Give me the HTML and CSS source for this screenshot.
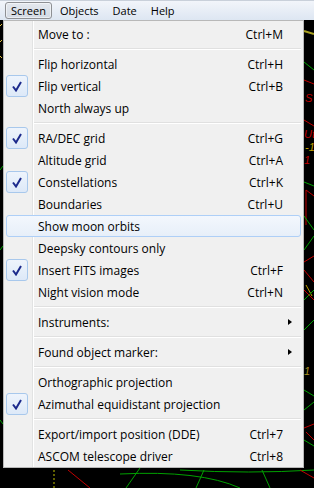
FILE: index.html
```html
<!DOCTYPE html>
<html lang="en">
<head>
<meta charset="UTF-8">
<meta name="viewport" content="width=device-width, initial-scale=1.0">
<title>Screen menu</title>
<link rel="stylesheet" href="styles.css">
</head>
<body>
  <div id="screen">
    <svg class="sky" width="314" height="488" viewBox="0 0 314 488">
      <!-- left strip -->
      <path d="M0 26 L2 24 M0 42 L2 40 M0 56 L2 58" stroke="#e0c040" fill="none" />
      <line x1="0" y1="170" x2="3" y2="166" stroke="#00a000" />
      <line x1="0" y1="250" x2="3" y2="246" stroke="#00a000" />
      <line x1="0" y1="420" x2="3" y2="424" stroke="#00a000" />
      <!-- right strip -->
      <path d="M304 31 L314 34" stroke="#a8a020" stroke-width="2" fill="none" />
      <path d="M304 62 L314 70" stroke="#00a000" fill="none" />
      <path d="M304 80 L314 84" stroke="#c00000" fill="none" />
      <text x="305" y="102" fill="#c00000" class="sky-label">S</text>
      <path d="M304 120 L314 126" stroke="#c00000" fill="none" />
      <text x="304" y="138" fill="#c00000" class="sky-label">Ut</text>
      <text x="305" y="151" fill="#c0a000" class="sky-label">-1</text>
      <text x="304" y="164" fill="#c00000" class="sky-label">1</text>
      <path d="M304 182 L314 186" stroke="#00a000" fill="none" />
      <path d="M306 190 L306 225 M306 190 L314 196" stroke="#c00000" fill="none" />
      <path d="M304 216 L314 230 M304 250 L314 236" stroke="#00a000" fill="none" />
      <path d="M304 262 L314 256 M304 270 L314 282 M304 290 L314 300" stroke="#c00000" fill="none" />
      <path d="M306 285 L312 296" stroke="#c0a000" fill="none" />
      <path d="M304 300 L314 290 M304 330 L314 320" stroke="#00a000" fill="none" />
      <text x="304" y="375" fill="#a89020" class="sky-label">1</text>
      <path d="M304 390 L314 396 M304 410 L314 402 M304 440 L314 446" stroke="#00a000" fill="none" />
      <path d="M304 428 L314 424 M306 432 L314 440" stroke="#c00000" fill="none" />
      <!-- bottom strip -->
      <path d="M54 470 L54 488" stroke="#c0c000" stroke-dasharray="2 2" />
      <path d="M68 470 L90 488" stroke="#c00000" fill="none" />
      <path d="M120 474 Q200 470 240 488" stroke="#00a000" fill="none" />
      <path d="M126 488 L140 468" stroke="#00a000" fill="none" />
      <path d="M180 470 Q250 474 314 470" stroke="#00a000" fill="none" />
      <path d="M196 488 L204 470" stroke="#00a000" fill="none" />
      <path d="M262 470 L270 488" stroke="#00a000" fill="none" />
      <path d="M300 470 L314 478" stroke="#c00000" fill="none" />
    </svg>

    <div class="menubar">
      <span class="top-item active">Screen</span>
      <span class="top-item">Objects</span>
      <span class="top-item">Date</span>
      <span class="top-item">Help</span>
    </div>

    <div class="dropdown">
      <div class="item"><span class="check"></span><span class="label">Move to :</span><span class="key">Ctrl+M</span></div>
      <div class="sep"></div>
      <div class="item"><span class="check"></span><span class="label">Flip horizontal</span><span class="key">Ctrl+H</span></div>
      <div class="item"><span class="check on"><svg width="10" height="11" viewBox="0 0 10 11"><path d="M1 5.5 L4 9.5 L9 1" /></svg></span><span class="label">Flip vertical</span><span class="key">Ctrl+B</span></div>
      <div class="item"><span class="check"></span><span class="label">North always up</span></div>
      <div class="sep"></div>
      <div class="item"><span class="check on"><svg width="10" height="11" viewBox="0 0 10 11"><path d="M1 5.5 L4 9.5 L9 1" /></svg></span><span class="label">RA/DEC grid</span><span class="key">Ctrl+G</span></div>
      <div class="item"><span class="check"></span><span class="label">Altitude grid</span><span class="key">Ctrl+A</span></div>
      <div class="item"><span class="check on"><svg width="10" height="11" viewBox="0 0 10 11"><path d="M1 5.5 L4 9.5 L9 1" /></svg></span><span class="label">Constellations</span><span class="key">Ctrl+K</span></div>
      <div class="item"><span class="check"></span><span class="label">Boundaries</span><span class="key">Ctrl+U</span></div>
      <div class="item hover"><span class="check"></span><span class="label">Show moon orbits</span></div>
      <div class="item"><span class="check"></span><span class="label">Deepsky contours only</span></div>
      <div class="item"><span class="check on"><svg width="10" height="11" viewBox="0 0 10 11"><path d="M1 5.5 L4 9.5 L9 1" /></svg></span><span class="label">Insert FITS images</span><span class="key">Ctrl+F</span></div>
      <div class="item"><span class="check"></span><span class="label">Night vision mode</span><span class="key">Ctrl+N</span></div>
      <div class="sep"></div>
      <div class="item"><span class="check"></span><span class="label">Instruments:</span><span class="arrow"></span></div>
      <div class="sep"></div>
      <div class="item"><span class="check"></span><span class="label">Found object marker:</span><span class="arrow"></span></div>
      <div class="sep"></div>
      <div class="item"><span class="check"></span><span class="label">Orthographic projection</span></div>
      <div class="item"><span class="check on"><svg width="10" height="11" viewBox="0 0 10 11"><path d="M1 5.5 L4 9.5 L9 1" /></svg></span><span class="label">Azimuthal equidistant projection</span></div>
      <div class="sep"></div>
      <div class="item"><span class="check"></span><span class="label">Export/import position (DDE)</span><span class="key">Ctrl+7</span></div>
      <div class="item"><span class="check"></span><span class="label">ASCOM telescope driver</span><span class="key">Ctrl+8</span></div>
    </div>
  </div>
</body>
</html>
```

FILE: styles.css
```css
body {
  margin: 0;
  padding: 0;
  background-color: #000;
  font-family: "Open Sans", "Noto Sans", sans-serif;
  font-size: 12px;
  color: #000;
}
#screen {
  position: relative;
  width: 314px;
  height: 488px;
  overflow: hidden;
  background-color: #000;
}
.sky {
  position: absolute;
  left: 0;
  top: 0;
}
.sky-label {
  font-family: "Liberation Sans", sans-serif;
  font-size: 11px;
  font-style: italic;
}
.menubar {
  position: relative;
  height: 20px;
  box-sizing: border-box;
  border-top: 1px solid #c9d0da;
  background: linear-gradient(#f2f5fa, #dde6f2);
  display: flex;
  align-items: center;
  padding-left: 5px;
  font-size: 11px;
}
.top-item {
  height: 17px;
  box-sizing: border-box;
  padding: 0 5px;
  line-height: 15px;
  border: 1px solid transparent;
  margin-right: 2px;
}
.top-item.active {
  border-color: #8e9094;
  border-radius: 3px;
  background: linear-gradient(#e4e8ee, #d3dae4);
  box-shadow: inset 0 0 0 1px rgba(255, 255, 255, 0.5);
}
.dropdown {
  position: absolute;
  left: 3px;
  top: 20px;
  width: 301px;
  box-sizing: border-box;
  border: 1px solid #b8b8b8;
  padding: 2px 2px 0 2px;
  background-color: #f0f0f0;
  background-image: linear-gradient(to right, transparent 28px, #e2e3e3 28px, #e2e3e3 29px, #fff 29px, #fff 30px, transparent 30px);
}
.item {
  height: 22px;
  display: flex;
  align-items: center;
  box-sizing: border-box;
  border: 1px solid transparent;
  border-radius: 3px;
}
.item.hover {
  border-color: #aecff7;
  background: linear-gradient(#f3f7fd, #e7eff9);
}
.check {
  width: 22px;
  height: 22px;
  margin-left: -1px;
  box-sizing: border-box;
  display: flex;
  align-items: center;
  justify-content: center;
  flex-shrink: 0;
}
.check.on {
  border: 1px solid #a8c8ec;
  border-radius: 3px;
  background: linear-gradient(#eef4fc, #dde9f8);
}
.check svg path {
  fill: none;
  stroke: #1c2a8c;
  stroke-width: 2;
}
.label {
  flex: 1;
  margin-left: 10px;
  white-space: nowrap;
}
.key {
  margin-right: 17px;
}
.arrow {
  width: 0;
  height: 0;
  border-top: 3.5px solid transparent;
  border-bottom: 3.5px solid transparent;
  border-left: 4px solid #000;
  margin-right: 8px;
}
.sep {
  height: 8px;
  box-sizing: border-box;
  margin-left: 28px;
  padding-top: 3px;
}
.sep::before {
  content: "";
  display: block;
  border-top: 1px solid #e0e0e0;
  border-bottom: 1px solid #fff;
}
```
